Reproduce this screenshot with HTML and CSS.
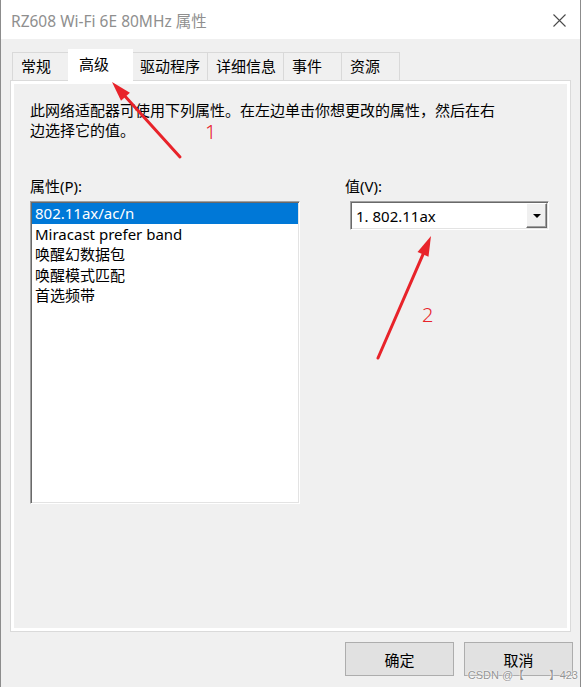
FILE: index.html
```html
<!DOCTYPE html>
<html lang="zh-CN">
<head>
  <meta charset="UTF-8">
  <title>RZ608 Wi-Fi 6E 80MHz 属性</title>
  <link rel="stylesheet" href="styles.css">
</head>
<body>

  <div class="window">
    <div class="titlebar">
      <span class="title">RZ608 Wi-Fi 6E 80MHz 属性</span>
      <svg class="close" width="13" height="13" viewBox="0 0 13 13">
        <path d="M0.5 0.5 L12.5 12.5 M12.5 0.5 L0.5 12.5" stroke="#4a4a4a" stroke-width="1.1" fill="none"/>
      </svg>
    </div>

    <div class="tabs">
      <div class="tab">常规</div>
      <div class="tab active">高级</div>
      <div class="tab">驱动程序</div>
      <div class="tab">详细信息</div>
      <div class="tab">事件</div>
      <div class="tab">资源</div>
    </div>

    <div class="panel">
      <p class="desc">此网络适配器可使用下列属性。在左边单击你想更改的属性，然后在右边选择它的值。</p>

      <div class="columns">
        <div class="col">
          <label class="field-label">属性(P):</label>
          <ul class="listbox">
            <li class="selected">802.11ax/ac/n</li>
            <li>Miracast prefer band</li>
            <li>唤醒幻数据包</li>
            <li>唤醒模式匹配</li>
            <li>首选频带</li>
          </ul>
        </div>
        <div class="col">
          <label class="field-label">值(V):</label>
          <div class="combo">
            <span class="combo-text">1. 802.11ax</span>
            <span class="combo-btn">
              <svg width="8" height="4" viewBox="0 0 8 4"><path d="M0 0 L8 0 L4 4 Z" fill="#000"/></svg>
            </span>
          </div>
        </div>
      </div>
    </div>

    <div class="buttons">
      <button class="btn">确定</button>
      <button class="btn">取消</button>
    </div>

    <div class="watermark">CSDN @【&nbsp;&nbsp;&nbsp;&nbsp;&nbsp;&nbsp;&nbsp;&nbsp;】423</div>

    <!-- annotation arrows drawn over the dialog -->
    <svg class="marks" width="581" height="687" viewBox="0 0 581 687">
      <line x1="180" y1="157" x2="125.5" y2="96.8" stroke="#e8232a" stroke-width="3" stroke-linecap="round"/>
      <polygon points="112,82 129.9,92.8 121,100.8" fill="#e8232a"/>
      <text x="205" y="139" class="mark-num">1</text>

      <line x1="378" y1="358" x2="423" y2="254.3" stroke="#e8232a" stroke-width="3" stroke-linecap="round"/>
      <polygon points="431,236 428.5,256.7 417.5,251.9" fill="#e8232a"/>
      <text x="422" y="322" class="mark-num">2</text>
    </svg>
  </div>

</body>
</html>
```

FILE: styles.css
```css
body {
  margin: 0;
  font-family: 'Noto Sans', 'Noto Sans CJK SC', sans-serif;
  font-size: 15px;
  color: #000;
  background-color: #f0f0f0;
}

.window {
  position: relative;
  width: 581px;
  height: 687px;
  box-sizing: border-box;
  border-left: 1px solid #8c8c8c;
  border-right: 1px solid #8c8c8c;
  background-color: #f0f0f0;
  overflow: hidden;
}

.titlebar {
  height: 39px;
  background-color: #fff;
  display: flex;
  align-items: center;
  justify-content: space-between;
  padding: 0 14px 0 10px;
}

.title {
  color: #8f8f8f;
  font-size: 15.5px;
  line-height: 20px;
  margin-top: 2px;
}

.close {
  display: block;
  margin-top: 2px;
}

.tabs {
  display: flex;
  align-items: flex-end;
  height: 28px;
  margin-top: 13px;
  padding-left: 11px;
}

.tab {
  height: 28px;
  min-width: 59px;
  box-sizing: border-box;
  padding: 0 7px 0 8px;
  border: 1px solid #d9d9d9;
  border-bottom: none;
  margin-right: -1px;
  line-height: 27px;
  font-size: 15px;
  background-color: #f0f0f0;
}

.tab.active {
  position: relative;
  z-index: 1;
  height: 33px;
  min-width: 65px;
  margin: 0 -2px -2px -2px;
  padding-left: 10px;
  line-height: 28px;
  background-color: #fff;
  border-color: #fff;
}

.panel {
  margin: 0 9px 0 9px;
  height: 552px;
  box-sizing: border-box;
  border: 1px solid #dadada;
  box-shadow: inset 0 0 0 3px #fff;
  padding: 19px 16px 0 19px;
}

.desc {
  margin: 0;
  width: 472px;
  line-height: 20px;
  font-size: 15px;
}

.columns {
  display: grid;
  grid-template-columns: 270px 1fr;
  column-gap: 45px;
  margin-top: 36px;
}

.field-label {
  display: block;
  line-height: 20px;
  margin-bottom: 5px;
}

.listbox {
  list-style: none;
  margin: 0;
  padding: 1px;
  height: 303px;
  box-sizing: border-box;
  background-color: #fff;
  border: 1px solid;
  border-color: #a0a0a0 #fff #fff #a0a0a0;
  box-shadow: inset 1px 1px 0 #696969, inset -1px -1px 0 #e3e3e3;
}

.listbox li {
  height: 20.5px;
  line-height: 21.5px;
  padding-left: 3px;
}

.listbox li.selected {
  background-color: #0078d7;
  color: #fff;
}

.combo {
  margin-left: 5px;
  width: 199px;
  height: 29px;
  box-sizing: border-box;
  display: flex;
  align-items: stretch;
  background-color: #fff;
  border: 1px solid;
  border-color: #a0a0a0 #fff #fff #a0a0a0;
  box-shadow: inset 1px 1px 0 #696969, inset -1px -1px 0 #e3e3e3;
  padding: 1px;
}

.combo-text {
  flex: 1;
  line-height: 27px;
  padding-left: 4px;
}

.combo-btn {
  width: 21px;
  box-sizing: border-box;
  display: flex;
  align-items: center;
  justify-content: center;
  background-color: #f0f0f0;
  border: 1px solid;
  border-color: #fff #696969 #696969 #fff;
  box-shadow: inset -1px -1px 0 #a0a0a0;
}

.buttons {
  display: flex;
  justify-content: flex-end;
  gap: 10px;
  margin-top: 10px;
  padding-right: 7px;
}

.btn {
  width: 109px;
  height: 34px;
  font-family: 'Noto Sans', 'Noto Sans CJK SC', sans-serif;
  font-size: 15px;
  color: #000;
  background-color: #e1e1e1;
  border: 1px solid #adadad;
  padding: 0;
}

.watermark {
  position: absolute;
  right: 2px;
  bottom: 5px;
  font-family: 'Liberation Sans', sans-serif;
  font-size: 11px;
  color: rgba(120, 120, 120, 0.8);
  text-shadow: 0 0 1px #fff, 0 0 2px #fff;
}

.marks {
  position: absolute;
  left: -1px;
  top: 0;
  pointer-events: none;
}

.mark-num {
  font-family: 'Noto Sans', sans-serif;
  font-weight: 300;
  font-size: 20px;
  fill: #e8232a;
}
```
